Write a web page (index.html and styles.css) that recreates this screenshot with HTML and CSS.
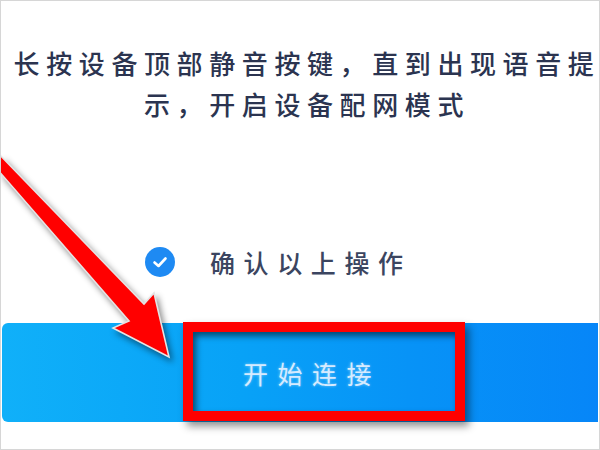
FILE: index.html
```html
<!DOCTYPE html>
<html lang="zh-CN">
<head>
    <meta charset="UTF-8">
    <title>设备配网</title>
    <link rel="stylesheet" href="styles.css">
</head>
<body>
    <div class="frame">
        <p class="tip">长按设备顶部静音按键，直到出现语音提示，开启设备配网模式</p>
        <div class="confirm">
            <svg class="check" width="30" height="30" viewBox="0 0 30 30">
                <circle cx="15" cy="15" r="15" fill="#1e8af3"/>
                <path d="M9.5 15.5 L13.5 19 L20.5 11.5" fill="none" stroke="#fff" stroke-width="2.6" stroke-linecap="round" stroke-linejoin="round"/>
            </svg>
            <span class="confirm-text">确认以上操作</span>
        </div>
        <div class="connect-bar">
            <span class="connect-text">开始连接</span>
            <div class="highlight"></div>
        </div>
        <svg class="arrow" width="600" height="450" viewBox="0 0 600 450">
            <polygon points="-4,151 143,303 153,292 168,356 112,327 128,320 -4,168" fill="#ff0000" stroke="#e4e4e4" stroke-width="1.6" stroke-linejoin="miter"/>
        </svg>
    </div>
</body>
</html>
```

FILE: styles.css
```css
html, body {
    margin: 0;
    padding: 0;
    background: #fff;
}

body {
    width: 600px;
    height: 450px;
    overflow: hidden;
    font-family: "Noto Sans CJK SC", "Noto Sans", sans-serif;
}

.frame {
    position: relative;
    box-sizing: border-box;
    width: 600px;
    height: 450px;
    border: 1px solid #d6d6d6;
    overflow: hidden;
    display: flex;
    flex-direction: column;
}

.tip {
    margin: 41px 0 0 11px;
    width: 590px;
    flex-shrink: 0;
    font-size: 26px;
    line-height: 41px;
    letter-spacing: 6.6px;
    text-align: center;
    color: #2b3450;
    font-weight: 500;
}

.confirm {
    display: flex;
    align-items: center;
    gap: 35px;
    margin-top: 123px;
    padding-left: 144px;
    height: 30px;
}

.check {
    display: block;
    flex-shrink: 0;
}

.confirm-text {
    font-size: 25px;
    line-height: 30px;
    letter-spacing: 8.6px;
    color: #3b4560;
    font-weight: 500;
}

.connect-bar {
    position: relative;
    margin: 46px 1px 0 1px;
    height: 99px;
    border-radius: 6px 0 0 6px;
    background: linear-gradient(90deg, #10b0f9 0%, #08a2f7 40%, #0792f7 70%, #0686f8 100%);
    display: flex;
    align-items: center;
    justify-content: center;
    padding-left: 24px;
}

.connect-text {
    font-size: 25px;
    letter-spacing: 9.5px;
    color: #d6ebff;
    text-shadow: 0 0 3px rgba(255, 255, 255, 0.5);
}

.highlight {
    position: absolute;
    left: 181px;
    top: -1px;
    width: 282px;
    height: 99px;
    box-sizing: border-box;
    border: 10px solid #ff0000;
    box-shadow: 4px 5px 8px rgba(0, 0, 0, 0.45), inset 3px 4px 6px rgba(0, 0, 0, 0.55);
}

.arrow {
    position: absolute;
    left: 0;
    top: 0;
    filter: drop-shadow(3px 4px 3px rgba(0, 0, 0, 0.45));
}
```
